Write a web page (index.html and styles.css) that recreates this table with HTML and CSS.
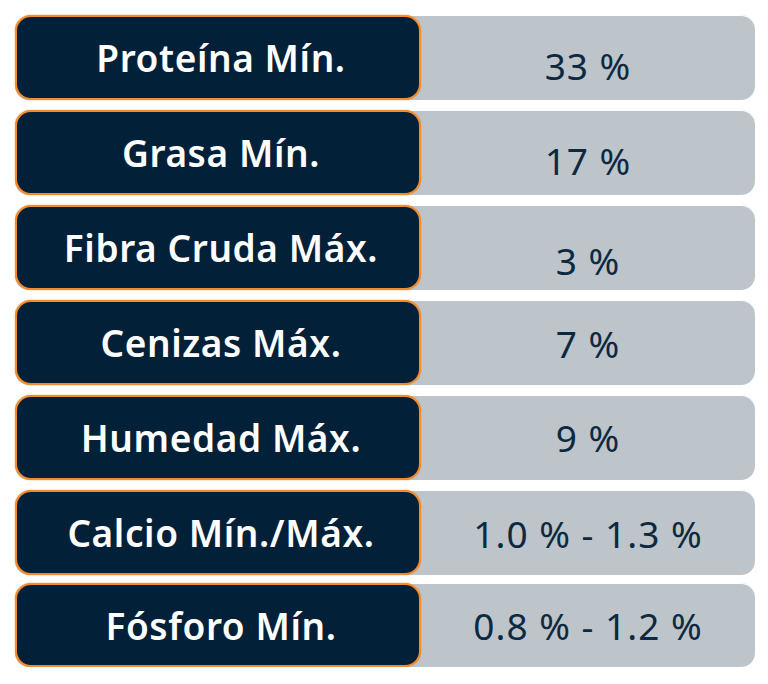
FILE: index.html
```html
<!DOCTYPE html>
<html lang="es">
<head>
<meta charset="utf-8">
<title>Análisis garantizado</title>
<link rel="stylesheet" href="styles.css">
</head>
<body>
<div class="table">
  <div class="row"><div class="label">Proteína Mín.</div><div class="value shift-8">33 %</div></div>
  <div class="row"><div class="label">Grasa Mín.</div><div class="value shift-8">17 %</div></div>
  <div class="row"><div class="label">Fibra Cruda Máx.</div><div class="value shift-12">3 %</div></div>
  <div class="row"><div class="label">Cenizas Máx.</div><div class="value shift-1">7 %</div></div>
  <div class="row"><div class="label">Humedad Máx.</div><div class="value">9 %</div></div>
  <div class="row"><div class="label">Calcio Mín./Máx.</div><div class="value shift-1">1.0 % - 1.3 %</div></div>
  <div class="row"><div class="label">Fósforo Mín.</div><div class="value">0.8 % - 1.2 %</div></div>
</div>
</body>
</html>
```

FILE: styles.css
```css
html, body {
  margin: 0;
  padding: 0;
  background: #ffffff;
}

body {
  font-family: "Noto Sans", "Open Sans", "DejaVu Sans", sans-serif;
}

.table {
  display: flex;
  flex-direction: column;
  gap: 10px;
  padding: 15px 0 0 15px;
  width: 740px;
}

.row {
  display: flex;
  height: 85px;
  background: #bdc4ca;
  border-radius: 14px;
  box-shadow: inset 0 1px 0 #ffffff;
}

.row:last-child {
  margin-top: -2px;
  height: 84px;
}

.label {
  box-sizing: border-box;
  width: 406px;
  flex: none;
  display: flex;
  align-items: center;
  justify-content: center;
  padding-left: 6px;
  background: #032039;
  border: 2px solid #f28b2c;
  border-radius: 16px;
  box-shadow: 0 0 1.5px #f28b2c;
  color: #ffffff;
  font-size: 37px;
  font-weight: 600;
  letter-spacing: 0.6px;
  line-height: 1;
}

.value {
  flex: 1;
  display: flex;
  align-items: center;
  justify-content: center;
  color: #0d2940;
  font-size: 37px;
  font-weight: 400;
  letter-spacing: 1px;
  line-height: 1;
}

.shift-1 { padding-top: 2px; }
.shift-8 { padding-top: 16px; }
.shift-12 { padding-top: 25px; }
```
